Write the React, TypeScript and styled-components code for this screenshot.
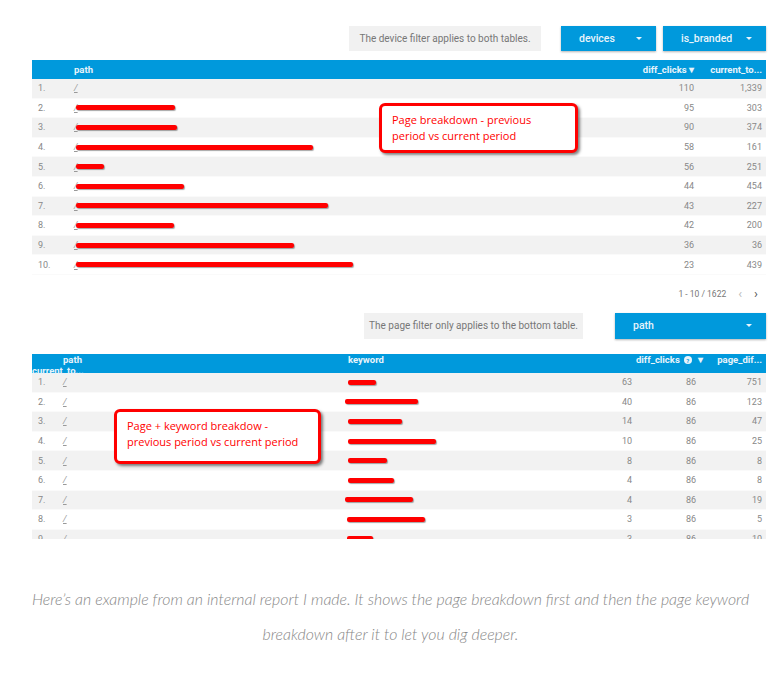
import React from "react";
import styled, { createGlobalStyle } from "styled-components";

const G = createGlobalStyle`
  body { margin: 0; background: #fff; font-family: Roboto, "Liberation Sans", sans-serif; }
`;
const Page = styled.div`width: 781px; height: 676px; overflow: hidden; position: relative;`;
const Section = styled.div`margin-left: 32px; width: 734px; position: relative;`;
const FilterRow = styled.div<{ mt: number; h: number }>`
  display: flex; justify-content: flex-end; align-items: center; gap: 7px;
  margin-top: ${(p) => p.mt}px; height: ${(p) => p.h}px;
`;
const Note = styled.div<{ w: number; mr: number }>`
  width: ${(p) => p.w}px; height: 100%; background: #f1f1f1; color: #777; font-size: 10px;
  display: flex; align-items: center; justify-content: center; margin-right: ${(p) => p.mr}px;
`;
const Drop = styled.div<{ w: number }>`
  width: ${(p) => p.w}px; height: 100%; background: #0099dc; color: #e8f4fb; font-size: 10.5px; font-weight: 500;
  display: flex; align-items: center; justify-content: space-between; padding: 0 14px 0 18px; box-sizing: border-box;
  box-shadow: 0 1px 2px rgba(0,0,0,0.3);
  &::after { content: ""; border: 3px solid transparent; border-top-color: #e8f4fb; margin-top: 3px; }
`;
const Table = styled.div<{ mt: number; h?: number }>`
  margin-top: ${(p) => p.mt}px; ${(p) => (p.h ? `height:${p.h}px; overflow:hidden;` : "")}
`;
const Row = styled.div<{ cols: string; head?: boolean; alt?: boolean }>`
  display: grid; grid-template-columns: ${(p) => p.cols}; align-items: center;
  height: ${(p) => (p.head ? 19 : 19.6)}px; font-size: ${(p) => (p.head ? 9.5 : 9)}px;
  background: ${(p) => (p.head ? "#0099dc" : p.alt ? "#f2f2f2" : "#fff")};
  color: ${(p) => (p.head ? "#e8f4fb" : "#888")}; font-weight: ${(p) => (p.head ? 700 : 400)};
  border-bottom: ${(p) => (p.head ? "none" : "1px solid #fafafa")}; box-sizing: border-box;
`;
const Num = styled.span`padding-left: 6px;`;
const Right = styled.span`text-align: right; padding-right: 4px; white-space: nowrap;`;
const Cell = styled.span`display: flex; align-items: center;`;
const Slash = styled.span`font-style: italic; text-decoration: underline; color: #999;`;
const Help = styled.span`
  display: inline-flex; width: 8px; height: 8px; border-radius: 50%; background: #e8f4fb; color: #0099dc;
  font-size: 6px; align-items: center; justify-content: center; margin: 0 6px 0 4px; vertical-align: middle;
`;
const Redact = styled.span<{ w: number; ml?: number }>`
  display: inline-block; height: 5px; background: #f00; width: ${(p) => p.w}px; margin-left: ${(p) => p.ml ?? 0}px;
  border-radius: 2px; box-shadow: 1px 1px 1px rgba(0,0,0,0.35);
`;
const Pager = styled.div`
  display: flex; justify-content: flex-end; align-items: center; gap: 12px; height: 38px; font-size: 8.5px; color: #777;
  padding-right: 8px;
`;
const Arrow = styled.span<{ dim?: boolean }>`font-size: 13px; color: ${(p) => (p.dim ? "#bbb" : "#555")};`;
const Callout = styled.div<{ x: number; y: number; w: number; h: number }>`
  position: absolute; left: ${(p) => p.x}px; top: ${(p) => p.y}px; width: ${(p) => p.w}px; height: ${(p) => p.h}px;
  border: 3px solid #f00; border-radius: 6px; background: #fff; box-sizing: border-box;
  box-shadow: 2px 2px 3px rgba(0,0,0,0.5); color: #f00; font-family: "Open Sans", sans-serif; font-size: 11px;
  line-height: 16px; padding: 6px 10px;
`;
const Caption = styled.p`
  margin: 42px 14px 0; text-align: center; font-family: Lato, sans-serif; font-weight: 300; font-style: italic;
  color: #888; font-size: 15.9px; line-height: 35px;
`;

const t1: [string, number, number, number][] = [
  ["1.", 0, 110, 1339], ["2.", 99, 95, 303], ["3.", 101, 90, 374], ["4.", 237, 58, 161], ["5.", 28, 56, 251],
  ["6.", 108, 44, 454], ["7.", 252, 43, 227], ["8.", 98, 42, 200], ["9.", 218, 36, 36], ["10.", 277, 23, 439],
];
const t2: [number, number, number, number, number][] = [
  [28, 0, 63, 86, 751], [73, -3, 40, 86, 123], [54, 0, 14, 86, 47], [88, 0, 10, 86, 25], [39, 0, 8, 86, 8],
  [46, 0, 4, 86, 8], [68, -3, 4, 86, 19], [78, -1, 3, 86, 5], [26, -1, 3, 86, 10],
];
const c1 = "42px 1fr 80px 68px";
const c2 = "31px 285px 1fr 66px 64px 66px";

export default function App() {
  return (
    <Page>
      <G />
      <Section>
        <FilterRow mt={26} h={25}>
          <Note w={192} mr={13}>The device filter applies to both tables.</Note>
          <Drop w={95}>devices</Drop>
          <Drop w={103}>is_branded</Drop>
        </FilterRow>
        <Table mt={9}>
          <Row cols={c1} head><span /><span>path</span><Right>diff_clicks ▾</Right><Right>current_to...</Right></Row>
          {t1.map(([n, w, a, b], i) => (
            <Row key={n} cols={c1} alt={i % 2 === 0}>
              <Num>{n}</Num>
              <Cell><Slash>/</Slash>{w > 0 && <Redact w={w} ml={-2} />}</Cell>
              <Right>{a}</Right><Right>{b.toLocaleString("en-US")}</Right>
            </Row>
          ))}
        </Table>
        <Pager><span>1 - 10 / 1622</span><Arrow dim>‹</Arrow><Arrow>›</Arrow></Pager>
        <Callout x={347} y={77} w={199} h={50}>Page breakdown - previous period vs current period</Callout>
      </Section>
      <Section>
        <FilterRow mt={0} h={26}>
          <Note w={219} mr={25}>The page filter only applies to the bottom table.</Note>
          <Drop w={151}>path</Drop>
        </FilterRow>
        <Table mt={15} h={185}>
          <Row cols={"31px 285px 1fr 64px 66px"} head><span /><span>path</span><span>keyword</span>
            <Right>diff_clicks<Help>?</Help>▾</Right><Right>page_dif...</Right><Right>current_to...</Right></Row>
          {t2.map(([w, ml, a, b, c], i) => (
            <Row key={i} cols={c2} alt={i % 2 === 0}>
              <Num>{i + 1}.</Num>
              <Cell><Slash>/</Slash></Cell>
              <Cell><Redact w={w} ml={ml} /></Cell>
              <Right>{a}</Right><Right>{b}</Right><Right>{c}</Right>
            </Row>
          ))}
        </Table>
        <Callout x={82} y={96} w={207} h={55}>Page + keyword breakdow - previous period vs current period</Callout>
      </Section>
      <Caption>Here’s an example from an internal report I made. It shows the page breakdown first and then the page keyword breakdown after it to let you dig deeper.</Caption>
    </Page>
  );
}
